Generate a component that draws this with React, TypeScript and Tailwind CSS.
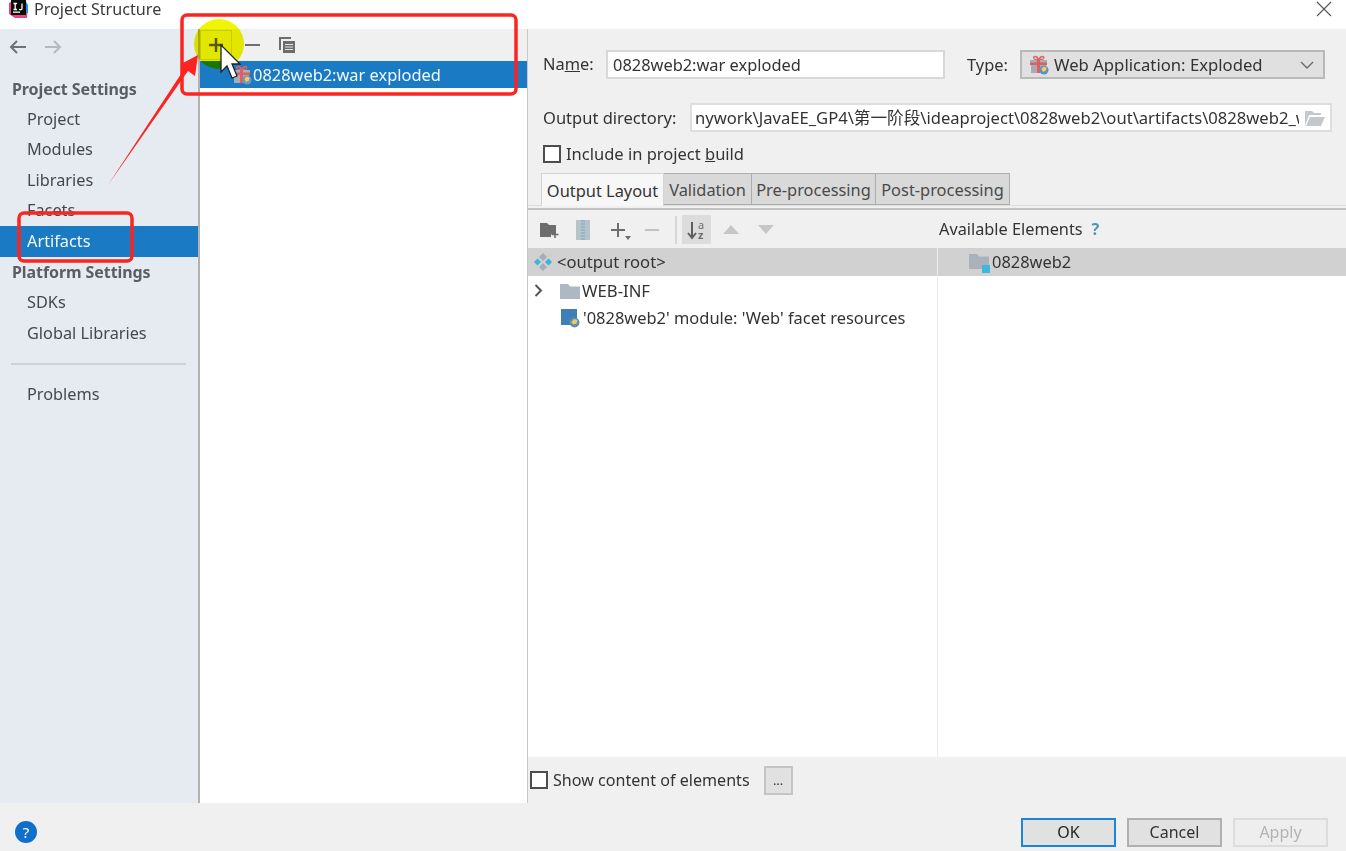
import React from "react";

const SideItem = ({ label, active }: { label: string; active?: boolean }) => (
  <div className={`h-[30.6px] flex items-center pl-[27px] text-[16.3px] ${active ? "bg-[#1a7bc4] text-[#f4f9fd]" : "text-[#45484b]"}`}>{label}</div>
);
const SideHead = ({ label }: { label: string }) => (
  <div className="h-[30.6px] flex items-center pl-[12px] pt-[1px] text-[16px] tracking-[-0.08px] font-bold text-[#5a5e63]">{label}</div>
);

const Gift = ({ badge }: { badge: string }) => (
  <svg width="20" height="20" viewBox="0 0 20 20" className="shrink-0">
    <path d="M6 1.5c-2 0-2 3 1 3h2.6C9 2.6 7.6 1.5 6 1.5zM13.5 1.5c2 0 2 3-1 3h-2.4c.6-1.900 2-3 3.400-3z" fill="none" stroke="#d9646a" strokeWidth="1.300" />
    <rect x="1" y="5" width="17" height="4" fill="#a9adb2" />
    <rect x="2" y="10" width="15" height="8" fill="#a9adb2" />
    <rect x="8" y="5" width="3" height="13" fill="#de5f63" />
    <rect x="1" y="7.500" width="17" height="2.500" fill="#de5f63" />
    <circle cx="15" cy="15" r="4.500" fill={badge} />
    <path d="M12.500 14l2-2.500 3 1-.5 3-3 1.500z" fill="#f4cd52" />
  </svg>
);

const FolderIcon = ({ color = "#afb8c2" }: { color?: string }) => (
  <svg width="20" height="16" viewBox="0 0 20 16" className="shrink-0">
    <path d="M0 1h8l2 2.500h10V16H0z" fill={color} />
  </svg>
);

const Tab = ({ label, cls }: { label: string; cls: string }) => (
  <div className={`flex items-center justify-center pt-[2px] bg-[#d9d9d9] border-t border-r border-b border-[#adadad] text-[#4a4a4a] ${cls}`}>{label}</div>
);

const Btn = ({ label, cls }: { label: string; cls: string }) => (
  <div className={`w-[95px] h-[29px] flex items-center justify-center text-[16px] ${cls}`}>{label}</div>
);

export default function App() {
  return (
    <div className="relative w-[1346px] h-[851px] overflow-hidden flex flex-col bg-[#f0f0f0] font-['Noto_Sans','Noto_Sans_CJK_SC',sans-serif] text-[16.4px] text-[#333]">
      {/* Title bar */}
      <div className="h-[29px] bg-white flex items-start shrink-0 pl-[9px] pr-[14px]">
        <svg width="19" height="19" viewBox="0 0 19 19" className="shrink-0">
          <path d="M0 3l5-3 9 1 5 5-1 12-12 0-6-4z" fill="#e8467c" />
          <path d="M10 0h6l3 5v8h-6z" fill="#2a8fe0" />
          <rect x="2" y="0" width="15" height="15" fill="#0b0b0b" />
          <rect x="4" y="11.500" width="7" height="1.300" fill="#fff" />
          <path d="M4.500 3.500h3.500M6.200 3.500v6M4.500 9.500h3.500M13 3.500v5c0 1.500-2 1.500-2.800.7" fill="none" stroke="#fff" strokeWidth="1.300" />
        </svg>
        <span className="ml-[6px] text-[16.15px] text-[#3a3a3a] leading-[18px]">Project Structure</span>
        <svg width="16" height="16" viewBox="0 0 16 16" className="ml-auto mt-[1px]">
          <path d="M1 1l14 14M15 1L1 15" stroke="#555" strokeWidth="1.100" />
        </svg>
      </div>

      {/* Main */}
      <div className="flex h-[774px] shrink-0">
        {/* Sidebar */}
        <div className="w-[198px] shrink-0 bg-[#e6ebf1]">
          <div className="h-[45px] pt-[11px] pl-[9px]">
            <div className="flex items-center gap-[17px]">
              <svg width="18" height="14" viewBox="0 0 18 14"><path d="M17 7H2M8 1L2 7l6 6" fill="none" stroke="#6e7276" strokeWidth="2" /></svg>
              <svg width="18" height="14" viewBox="0 0 18 14"><path d="M1 7h15M10 1l6 6-6 6" fill="none" stroke="#b4b9be" strokeWidth="2" /></svg>
            </div>
          </div>
          <div className="h-[29.6px] flex items-center pl-[12px] text-[16px] tracking-[-0.08px] font-bold text-[#5a5e63]">Project Settings</div>
          <SideItem label="Project" />
          <SideItem label="Modules" />
          <SideItem label="Libraries" />
          <SideItem label="Facets" />
          <SideItem label="Artifacts" active />
          <SideHead label="Platform Settings" />
          <SideItem label="SDKs" />
          <SideItem label="Global Libraries" />
          <div className="h-[30.6px] flex items-center pl-[11px] pr-[12px]">
            <div className="w-full h-[2px] bg-[#cdd1d6]" />
          </div>
          <SideItem label="Problems" />
        </div>
        <div className="w-[2px] shrink-0 bg-[#b2b2b2]" />

        {/* Middle */}
        <div className="w-[327px] shrink-0 bg-white flex flex-col">
          <div className="h-[32px] bg-[#f0f0f0] flex items-center">
            <div className="w-[32px] h-[30px] border border-[#d2d51b] flex items-center justify-center">
              <svg width="14" height="14" viewBox="0 0 14 14"><path d="M7 0v14M0 7h14" stroke="#5f5f5f" strokeWidth="2.500" /></svg>
            </div>
            <svg width="15" height="14" viewBox="0 0 15 14" className="ml-[13px]"><path d="M0 7h15" stroke="#6d6d6d" strokeWidth="2" /></svg>
            <svg width="17" height="17" viewBox="0 0 17 17" className="ml-[19px]">
              <path d="M1 13V1h11" fill="none" stroke="#6d6d6d" strokeWidth="2" />
              <rect x="4" y="4" width="12" height="12" fill="#6d6d6d" />
              <path d="M6 7.500h8M6 10h8M6 12.500h8" stroke="#e6e6e6" strokeWidth="1" />
            </svg>
          </div>
          <div className="h-[27px] bg-[#1a7bc4] flex items-center pl-[32px] text-[#f4f9fd]">
            <Gift badge="#6d97c4" />
            <span className="ml-[1px] pt-[1px]">0828web2:war exploded</span>
          </div>
        </div>
        <div className="w-[1px] shrink-0 bg-[#c8c8c8]" />

        {/* Right */}
        <div className="flex-1 flex flex-col bg-[#f0f0f0] min-w-0">
          <div className="flex items-center h-[29px] mt-[21px] pl-[15px]">
            <span className="w-[63px]">Na<span className="underline">m</span>e:</span>
            <div className="w-[339px] h-[29px] bg-white border-2 border-[#d8d8d8] pl-[5px] pt-[1px] flex items-center">0828web2:war exploded</div>
            <span className="ml-[22px] w-[53px] pt-[1px]">Type:</span>
            <div className="w-[305px] h-[29px] bg-[#e0e0e0] border-2 border-[#b9b9b9] flex items-center pl-[7px] pr-[9px] pt-[1px] text-[16.7px]">
              <Gift badge="#5b93c8" />
              <span className="ml-[5px]">Web Application: Exploded</span>
              <svg width="14" height="8" viewBox="0 0 14 8" className="ml-auto"><path d="M1 1l6 6 6-6" fill="none" stroke="#6a6a6a" strokeWidth="1.400" /></svg>
            </div>
          </div>
          <div className="flex items-center h-[29px] mt-[24px] pl-[15px]">
            <span className="w-[147px] shrink-0 pt-[1px] text-[16.5px]">Output directory:</span>
            <div className="w-[642px] h-[29px] bg-white border-2 border-[#dedede] pl-[3px] pr-[5px] pt-[1px] flex items-center text-[16.6px]">
              <span className="flex-1 overflow-hidden whitespace-nowrap">nywork\JavaEE_GP4\第一阶段\ideaproject\0828web2\out\artifacts\0828web2_war_exploded</span>
              <svg width="20" height="15" viewBox="0 0 20 15" className="ml-[6px] shrink-0"><path d="M0 15V0h7l2 2h7v2H4zM1 15l4-9h15l-4 9z" fill="#c5c8cb" /></svg>
            </div>
          </div>
          <div className="flex items-center h-[18px] mt-[13px] pl-[15px] text-[16.5px]">
            <div className="w-[18px] h-[18px] bg-white border-2 border-[#4d4d4d]" />
            <span className="ml-[5px]">Include in project <span className="underline">b</span>uild</span>
          </div>
          <div className="flex h-[32px] mt-[10px] pl-[13px] relative z-10">
            <div className="w-[123px] h-[33px] bg-[#f7f7f7] border-l border-t border-r border-[#d4d4d4] flex items-center justify-center pt-[2px]">Output Layout</div>
            <Tab label="Validation" cls="w-[88px]" />
            <Tab label="Pre-processing" cls="w-[124px]" />
            <Tab label="Post-processing" cls="w-[134px]" />
          </div>
          <div className="h-[5px] shrink-0 border-t border-[#dcdcdc] border-b-2 border-b-[#c2c2c2]" />

          {/* Layout toolbar */}
          <div className="h-[38px] flex items-center pt-[1px]">
            <div className="flex-1 flex items-center pl-[12px]">
              <svg width="19" height="16" viewBox="0 0 19 16"><path d="M0 1h7l2 2h7v9h-5v3H0z" fill="#6d6d6d" /><path d="M15 9v7M11.500 12.500h7" stroke="#6d6d6d" strokeWidth="1.600" /></svg>
              <svg width="14" height="22" viewBox="0 0 14 22" className="ml-[17px]">
                <rect x="0" y="1" width="14" height="20" fill="#b9c3c7" />
                <path d="M5 2h4M5 5h4M5 8h4M5 11h4M5 14h4M5 17h4M5 20h4" stroke="#7fb7c9" strokeWidth="1.500" />
              </svg>
              <svg width="22" height="22" viewBox="0 0 22 22" className="ml-[21px]">
                <path d="M7 4v14M0 11h14" stroke="#6d6d6d" strokeWidth="2" />
                <path d="M14 17h6l-3 4z" fill="#6d6d6d" />
              </svg>
              <svg width="14" height="4" viewBox="0 0 14 4" className="ml-[12px]"><path d="M0 2h14" stroke="#c2c2c2" strokeWidth="2" /></svg>
              <div className="w-[2px] h-[28px] bg-[#d6d6d6] ml-[16px]" />
              <div className="w-[29px] h-[29px] ml-[5px] bg-[#dcdcdc] flex items-center justify-center">
                <svg width="20" height="24" viewBox="0 0 20 24">
                  <path d="M5 4v15M1 15l4 5 4-5" fill="none" stroke="#5e5e5e" strokeWidth="2" />
                  <text x="11" y="11" fontSize="11" fill="#6d6d6d" fontFamily="Noto Sans">a</text>
                  <text x="11" y="21" fontSize="11" fontWeight="700" fill="#6d6d6d" fontFamily="Noto Sans">z</text>
                </svg>
              </div>
              <svg width="16" height="9" viewBox="0 0 16 9" className="ml-[12px]"><path d="M8 0l8 9H0z" fill="#c6c6c6" /></svg>
              <svg width="16" height="9" viewBox="0 0 16 9" className="ml-[19px]"><path d="M0 0h16l-8 9z" fill="#c6c6c6" /></svg>
            </div>
            <div className="w-[407px] flex items-center text-[16.3px]">
              Available Elements
              <span className="ml-[9px] text-[#4f97bd] font-bold">?</span>
            </div>
          </div>

          {/* Trees */}
          <div className="h-[509px] flex bg-white">
            <div className="w-[410px] shrink-0 border-r border-[#ececec]">
              <div className="h-[28px] bg-[#d1d1d1] flex items-center pl-[5px] text-[16.6px]">
                <svg width="20" height="20" viewBox="0 0 20 20">
                  <path d="M10 1l4 4-4 4-4-4z" fill="#a5adb5" />
                  <path d="M10 11l4 4-4 4-4-4z" fill="#a5adb5" />
                  <path d="M4.500 6.500l3.500 3.500-3.500 3.500L1 10z" fill="#3fb2dc" />
                  <path d="M15.500 6.500L19 10l-3.500 3.500L12 10z" fill="#3fb2dc" />
                </svg>
                <span className="ml-[4px]">&lt;output root&gt;</span>
              </div>
              <div className="h-[28px] flex items-center pl-[6px] pt-[1px] text-[16.7px]">
                <svg width="9" height="13" viewBox="0 0 9 13"><path d="M1.500 1l5.500 5.500L1.500 12" fill="none" stroke="#555" strokeWidth="2" /></svg>
                <span className="ml-[17px]"><FolderIcon /></span>
                <span className="ml-[2px]">WEB-INF</span>
              </div>
              <div className="h-[28px] flex items-center pl-[33px] pt-[1px] text-[16.45px]">
                <svg width="19" height="19" viewBox="0 0 19 19" className="shrink-0">
                  <rect x="0" y="0" width="16" height="16" fill="#3f7fb5" />
                  <circle cx="13.500" cy="13.500" r="5" fill="#5d8fbe" />
                  <path d="M10.500 13l2.500-3 3.500 1-1 3.500-3.500 1z" fill="#f2cc50" />
                </svg>
                <span className="ml-[3px]">'0828web2' module: 'Web' facet resources</span>
              </div>
            </div>
            <div className="flex-1">
              <div className="h-[28px] bg-[#d1d1d1] flex items-center pl-[31px]">
                <span className="relative w-[20px] h-[18px]">
                  <FolderIcon color="#a9b2bb" />
                  <span className="absolute right-[-1px] bottom-[-2px] w-[8px] h-[8px] bg-[#3db7e0]" />
                </span>
                <span className="ml-[3px]">0828web2</span>
              </div>
            </div>
          </div>

          {/* Show content */}
          <div className="flex-1 flex items-center pl-[2px] text-[16.1px]">
            <div className="w-[18px] h-[18px] bg-white border-2 border-[#4d4d4d]" />
            <span className="ml-[5px]">Show content of elements</span>
            <div className="ml-[14px] w-[29px] h-[29px] bg-[#e1e1e1] border-2 border-[#c4c4c4] flex items-center justify-center text-[13px] leading-none">...</div>
          </div>
        </div>
      </div>

      {/* Footer */}
      <div className="flex-1 flex items-center pl-[15px] pr-[17px] pt-[10px]">
        <div className="w-[22px] h-[22px] rounded-full bg-[#0f6fcb] text-white text-[15px] flex items-center justify-center">?</div>
        <div className="ml-auto flex gap-[11px] mr-[1px]">
          <Btn label="OK" cls="bg-[#e1e1e1] border-2 border-[#1b85d6] text-[#222]" />
          <Btn label="Cancel" cls="bg-[#e1e1e1] border-2 border-[#b0b0b0] text-[#333]" />
          <Btn label="Apply" cls="bg-[#eeeeee] border-2 border-[#dcdcdc] text-[#b3b3b3]" />
        </div>
      </div>

      {/* Annotations drawn over the dialog */}
      <svg width="1346" height="851" viewBox="0 0 1346 851" className="absolute inset-0 pointer-events-none">
        <circle cx="219" cy="44" r="25" fill="#f2f500" style={{ mixBlendMode: "multiply" }} />
        <path d="M221 45v27l6-6 5 12 5-2-5-12h8z" fill="#fff" stroke="#222" strokeWidth="1.300" />
        <rect x="182" y="15" width="334" height="79" rx="5" fill="none" stroke="#fb2420" strokeWidth="3.500" />
        <rect x="19" y="213" width="113" height="48" rx="5" fill="none" stroke="#fb2420" strokeWidth="3.500" />
        <path d="M108 185L181 74l2-11 15-8-3 21-7-5z" fill="#fb2420" />
      </svg>
    </div>
  );
}
